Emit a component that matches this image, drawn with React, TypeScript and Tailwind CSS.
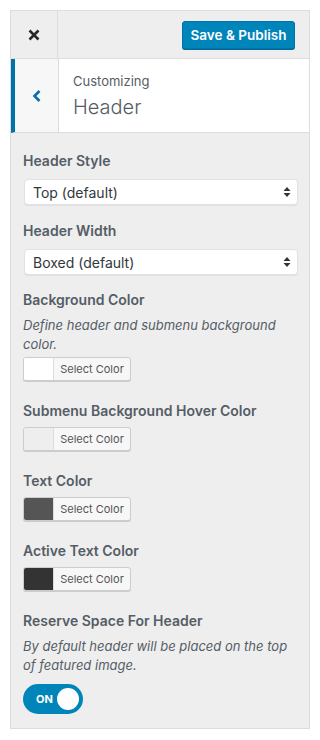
import React from "react";

const font = { fontFamily: 'Inter, "Noto Sans", "Liberation Sans", sans-serif' };

function Label({ children, className = "" }: { children: React.ReactNode; className?: string }) {
  return (
    <div className={"text-[14px] leading-[20px] font-semibold text-[#555d66] " + className}>{children}</div>
  );
}

function SelectBox({ value }: { value: string }) {
  return (
    <div className="ml-px w-[274px] h-[26px] bg-white rounded-[4px] border border-[#e2e2e2] shadow-[0_1px_1px_rgba(0,0,0,0.06)] flex items-center justify-between pl-[8px] pr-[6px]">
      <span className="text-[14px] text-[#32373c]">{value}</span>
      <svg width="8" height="12" viewBox="0 0 8 12">
        <path d="M4 1 L7.5 5 L0.5 5 Z" fill="#333" />
        <path d="M4 11 L7.5 7 L0.5 7 Z" fill="#333" />
      </svg>
    </div>
  );
}

function ColorButton({ color }: { color: string }) {
  return (
    <div className="flex w-[108px] h-[24px] rounded-[3px] border border-[#cccccc] bg-[#f7f7f7] shadow-[0_1px_0_#cccccc] overflow-hidden">
      <div className="w-[30px] h-full border-r border-[#dddddd]" style={{ backgroundColor: color }} />
      <div className="flex-1 flex items-center justify-center text-[11px] text-[#555555]">Select Color</div>
    </div>
  );
}

export default function App() {
  return (
    <div className="bg-white w-[320px] h-[740px] pt-[10px] pl-[10px]" style={font}>
      <div className="w-[300px] h-[719px] border border-[#dddddd] bg-[#eeeeee] flex flex-col">
        {/* top bar */}
        <div className="h-[48px] flex border-b border-[#dddddd]">
          <div className="w-[47px] border-r border-[#dddddd] flex items-center justify-center pt-[1px]">
            <svg width="12" height="12" viewBox="0 0 12 12">
              <path d="M1.5 1.5 L10.5 10.5 M10.5 1.5 L1.5 10.5" stroke="#23282d" strokeWidth="2.6" strokeLinecap="butt" />
            </svg>
          </div>
          <div className="flex-1 flex items-center justify-end pr-[14px] pt-[1px]">
            <div className="w-[113px] h-[28px] rounded-[3px] bg-[#0085ba] border border-[#0073aa] shadow-[0_1px_0_#006799] flex items-center justify-center text-white text-[13.5px] font-semibold">
              Save &amp; Publish
            </div>
          </div>
        </div>
        {/* header */}
        <div className="h-[74px] flex bg-white border-l-4 border-[#0073aa] border-b border-b-[#dddddd]">
          <div className="w-[44px] bg-[#f7f7f7] border-r border-[#dddddd] flex items-center justify-center">
            <svg width="10" height="14" viewBox="0 0 10 14">
              <path d="M7.5 2 L2.5 7 L7.5 12" stroke="#0073aa" strokeWidth="2.6" fill="none" />
            </svg>
          </div>
          <div className="flex-1 pl-[14px] pt-[13px]">
            <div className="text-[13px] leading-[18px] text-[#555d66]">Customizing</div>
            <div className="text-[20px] leading-[28px] font-light text-[#555d66] mt-[3px]">Header</div>
          </div>
        </div>
        {/* content */}
        <div className="px-[12px] pt-[18px]">
          <Label className="mb-[8px]">Header Style</Label>
          <SelectBox value="Top (default)" />
          <Label className="mt-[16px] mb-[8px]">Header Width</Label>
          <SelectBox value="Boxed (default)" />

          <Label className="mt-[15px] mb-[6px]">Background Color</Label>
          <div className="text-[13px] leading-[19px] italic text-[#555d66] mb-[3px] pr-[20px]">
            Define header and submenu background color.
          </div>
          <ColorButton color="#ffffff" />

          <Label className="mt-[20px] mb-[6px]">Submenu Background Hover Color</Label>
          <ColorButton color="#eeeeee" />

          <Label className="mt-[20px] mb-[6px]">Text Color</Label>
          <ColorButton color="#555555" />

          <Label className="mt-[20px] mb-[6px]">Active Text Color</Label>
          <ColorButton color="#333333" />

          <Label className="mt-[20px] mb-[6px]">Reserve Space For Header</Label>
          <div className="text-[13px] leading-[19px] italic text-[#555d66] mb-[9px]">
            By default header will be placed on the top of featured image.
          </div>
          <div className="w-[60px] h-[30px] rounded-full bg-[#0085ba] flex items-center justify-between pl-[13px] pr-[4px]">
            <span className="text-[11px] font-bold text-white">ON</span>
            <div className="w-[22px] h-[22px] rounded-full bg-white" />
          </div>
        </div>
      </div>
    </div>
  );
}
